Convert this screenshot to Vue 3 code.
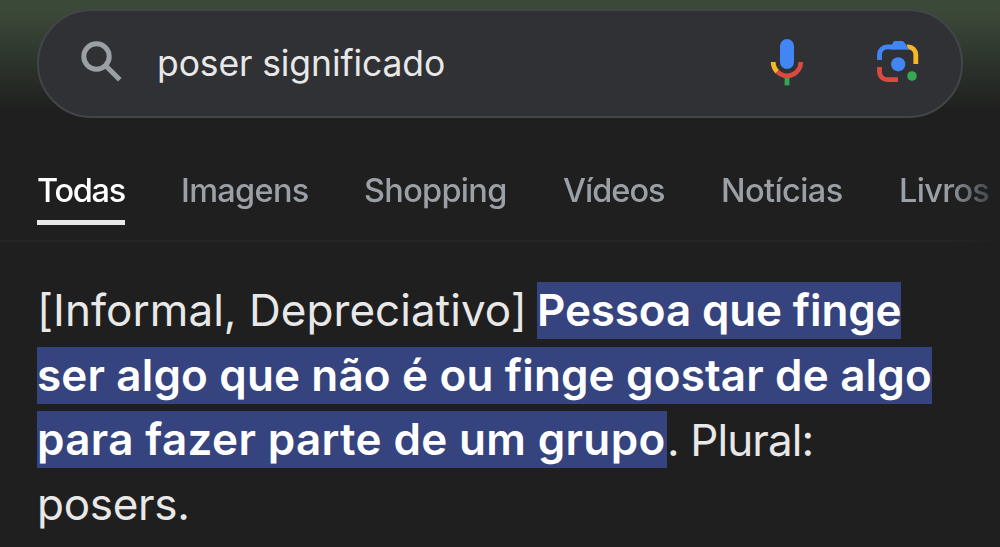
<script setup>
import { ref } from 'vue'
const query = ref('poser significado')
const active = ref('todas')
const tabs = [
  { id: 'todas', label: 'Todas' },
  { id: 'imagens', label: 'Imagens' },
  { id: 'shopping', label: 'Shopping' },
  { id: 'videos', label: 'Vídeos' },
  { id: 'noticias', label: 'Notícias' },
  { id: 'livros', label: 'Livros' }
]
</script>
<template>
  <div class="page">
    <form class="search" @submit.prevent>
      <svg class="icon-search" viewBox="0 0 42 42"><circle cx="15.5" cy="15.5" r="12.7" /><path d="M24.5 24.5 38.8 38.8" /></svg>
      <input v-model="query" class="query" spellcheck="false" aria-label="Pesquisar">
      <svg class="icon-mic" viewBox="0 0 34 48">
        <rect x="10" y="1" width="14" height="30" rx="7" fill="#4285f4" />
        <rect x="14.6" y="39" width="4.8" height="8.4" fill="#34a853" />
        <path d="M3.2 24a13.8 13.8 0 0 0 4.1 9.8" stroke="#f5b824" />
        <path d="M7.3 33.8A13.8 13.8 0 0 0 30.8 24" class="red" />
      </svg>
      <svg class="icon-lens" viewBox="0 0 44 44">
        <path d="M31 7.9h1.2a7.6 7.6 0 0 1 7.6 7.6V25" stroke="#f5b824" />
        <path d="M3.5 21v-5.5a7.6 7.6 0 0 1 7.6-7.6H30" stroke="#4285f4" />
        <path d="M14 9.5 17.3 3Q18 2 19.2 2H25.8Q27 2 28 3L33.5 10.4H14z" fill="#4285f4" />
        <path d="M3.5 28v5a7.6 7.6 0 0 0 7.6 7.6H22" class="red" />
        <circle cx="22.2" cy="25.3" r="7.1" fill="#4285f4" />
        <circle cx="36" cy="37" r="4.8" fill="#34a853" />
      </svg>
    </form>
    <nav class="tabs">
      <a v-for="t in tabs" :key="t.id" class="tab" :class="[t.id, { active: active === t.id }]" @click="active = t.id">{{ t.label }}</a>
    </nav>
    <div class="answer">
      <div class="line"><span class="l1">[Informal, Depreciativo]</span><mark class="m1">Pessoa que finge</mark></div>
      <div class="line"><mark class="m2">ser algo que não é ou finge gostar de algo</mark></div>
      <div class="line"><mark class="m3">para fazer parte de um grupo</mark><span class="l3">. Plural:</span></div>
      <div class="line"><span class="l4">posers.</span></div>
    </div>
  </div>
</template>

<style>
body { background: #1f1f1f; overflow: hidden; }
</style>
<style scoped>
.page { box-sizing: border-box; width: 1000px; height: 547px; padding-top: 9px; overflow: hidden; background: linear-gradient(#3c4a3b 0, #3b4838 14px, #303a2f 48px, #1f1f1f 110px); font-family: Inter, "Liberation Sans", sans-serif; color: #e8e8e8; }
.search { box-sizing: border-box; display: flex; align-items: center; width: 926px; height: 109px; margin-left: 37px; padding: 0 41px 4px 42px; background: #303134; border: 2px solid #434548; border-radius: 55px; }
.icon-search { width: 42px; height: 42px; fill: none; stroke: #9aa0a6; stroke-width: 5; flex-shrink: 0; }
.query { flex: 1; min-width: 0; height: 60px; margin-left: 34px; padding: 3px 0 0; border: none; outline: none; background: none; color: #e8e8e8; font: 400 35.5px Inter, "Liberation Sans", sans-serif; letter-spacing: -0.1px; }
.icon-mic { width: 34px; height: 48px; margin-right: 72px; fill: none; stroke-width: 4.8; flex-shrink: 0; }
.icon-lens { width: 44px; height: 44px; margin-bottom: 2px; fill: none; stroke-width: 4.8; flex-shrink: 0; }
.red { stroke: #db4a41; }
.tabs { box-sizing: border-box; display: flex; gap: 56px; height: 124px; padding: 48px 0 0 37px; border-bottom: 2px solid #262626; white-space: nowrap; mask-image: linear-gradient(90deg, #000 945px, transparent 1010px); }
.tab { box-sizing: border-box; height: 59px; flex-shrink: 0; color: #9aa0a6; font-size: 32.5px; font-weight: 500; line-height: 50px; letter-spacing: -0.7px; cursor: pointer; }
.tab.active { color: #fff; border-bottom: 5px solid #e8e8e8; }
.todas { width: 88px; letter-spacing: -1.3px; }
.imagens { width: 127px; }
.shopping { width: 143px; }
.videos { width: 102px; letter-spacing: -1px; }
.noticias { width: 122px; letter-spacing: -0.6px; }
.answer { margin: 36px 0 0 37px; font-size: 44px; }
.line { display: flex; align-items: center; height: 64.7px; white-space: pre; }
mark { height: 57px; line-height: 57px; background: #35437e; color: #fff; font-weight: 600; }
.l1 { width: 500px; letter-spacing: 0.05px; }
.m1 { width: 364px; letter-spacing: -0.15px; }
.m2 { width: 895px; letter-spacing: 0.15px; }
.m3 { width: 630px; letter-spacing: 0.35px; }
.l3 { letter-spacing: -0.9px; }
.l4 { letter-spacing: -0.3px; }
</style>
